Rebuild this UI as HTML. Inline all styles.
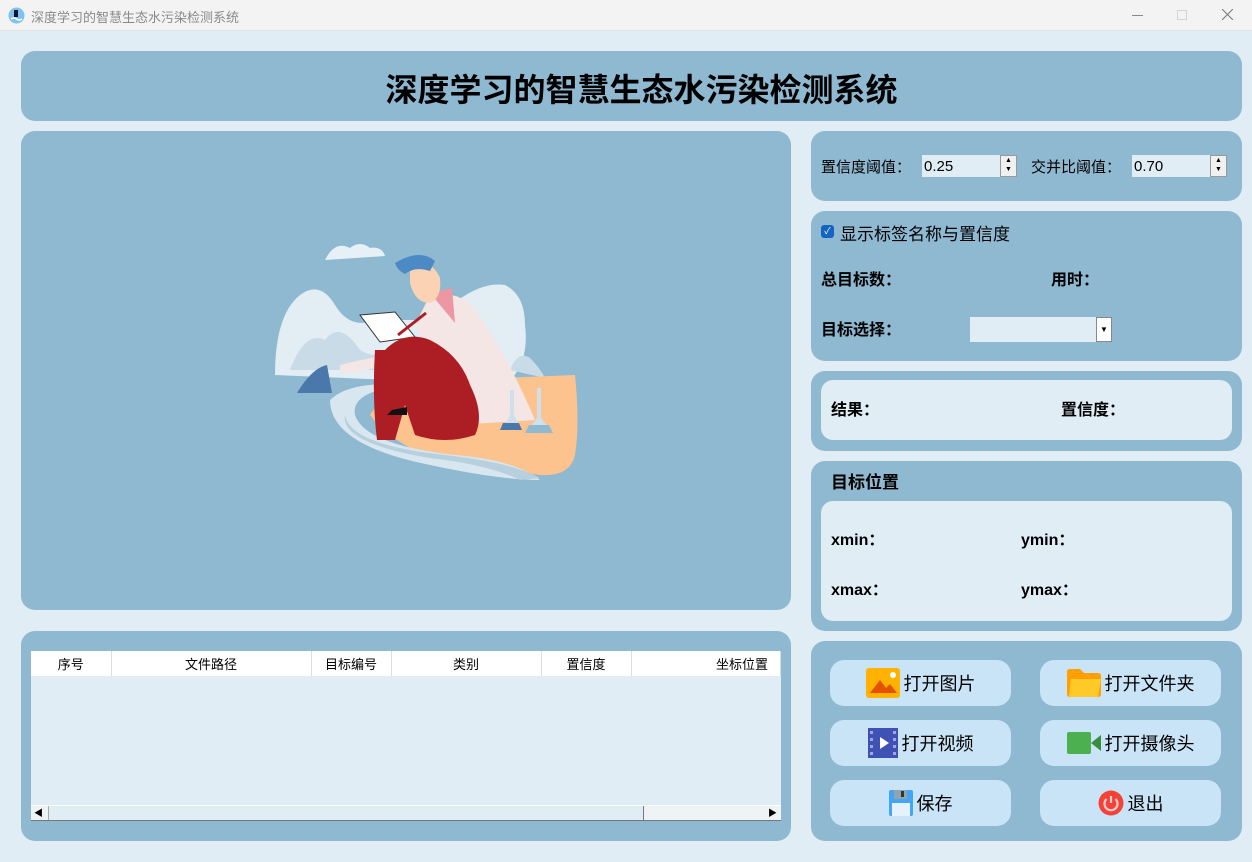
<!DOCTYPE html>
<html><head><meta charset="utf-8"><style>
*{margin:0;padding:0;box-sizing:border-box}
body{width:1252px;height:862px;overflow:hidden;background:#e1edf5;font-family:"Liberation Sans","Noto Sans CJK SC","Microsoft YaHei",sans-serif;position:relative;color:#000}
.a{position:absolute}
.p{position:absolute;background:#8fb8d1;border-radius:14px}
.in{position:absolute;background:#e1edf5;border-radius:12px}
.b{font-weight:bold;font-size:16px}
.btn{position:absolute;background:#c9e4f6;border-radius:14px;width:181px;height:46px;display:flex;align-items:center;justify-content:center;font-size:18px;gap:4px}
.spin{position:absolute;background:#e1edf5;height:22px;font-size:15px;padding:3px 0 0 2px}
.arr{position:absolute;right:0;top:0;width:17px;height:22px;background:#f0f0f0;border:1px solid #999;font-size:7px;line-height:9px;text-align:center}
th{font-weight:normal;font-size:13px;border-right:1px solid #ddd;height:25px;background:#fff}
</style></head><body>
<div class="a" style="left:0;top:0;width:1252px;height:31px;background:#f3f3f3;border-bottom:1px solid #e6e6e6"></div>
<svg class="a" style="left:8px;top:7px" width="17" height="17"><circle cx="8.5" cy="8.5" r="8" fill="#7cc3ef"/><rect x="6" y="3" width="4" height="7" fill="#113"/><path d="M3 12 q3 -2 5.5 0 t5.5 0" stroke="#fff" fill="none" stroke-width="1.5"/></svg>
<div class="a" style="left:31px;top:7px;font-size:13px;color:#8a8a8a">深度学习的智慧生态水污染检测系统</div>
<div class="a" style="left:1132px;top:15px;width:11px;height:1px;background:#888"></div>
<div class="a" style="left:1177px;top:10px;width:10px;height:10px;border:1px solid #d4d4d4"></div>
<svg class="a" style="left:1222px;top:9px" width="11" height="11"><path d="M0 0L11 11M11 0L0 11" stroke="#777" stroke-width="1"/></svg>

<div class="p" style="left:21px;top:51px;width:1221px;height:70px"></div>
<div class="a" style="left:41px;top:65px;width:1201px;text-align:center;font-size:32px;font-weight:bold">深度学习的智慧生态水污染检测系统</div>

<div class="p" style="left:21px;top:131px;width:770px;height:479px"></div>
<svg class="a" style="left:270px;top:235px" width="320" height="250" viewBox="0 0 320 250">
<path d="M55 25 q10-20 25-12 q10-8 20 0 q12-2 15 8 z" fill="#e6f0f6"/>
<path d="M5 140 q0-60 25-80 q20-15 35 10 q15 25 40 15 l60 0 q40-40 70-35 q20 10 20 40 q5 40-20 60 l-230 -10z" fill="#e2edf4"/>
<path d="M20 135 q15-40 35-30 q15-20 35 10 q15 10 35 0 l0 20z" fill="#c9dbe7"/>
<path d="M240 135 q8-20 20-12 q10 10 15 20z" fill="#c9dbe7"/>
<path d="M100 180 q40 50 130 55 l40 5 q30 2 35-20 q5-30 0-80 l-120 5 q-70 10-85 35z" fill="#fdc38e"/>
<path d="M60 165 q20-20 80-15 q-60 5-55 30 q10 30 100 40 q60 5 85 25 q-40 0-110-15 q-100-20-100-65z" fill="#d7e6ef"/>
<path d="M75 180 q5 30 100 40 q70 8 95 23 l-20 2 q-30-15-90-22 q-90-15-85-43z" fill="#b8d0de"/>
<path d="M27 158 q15-25 30-28 l5 28z" fill="#4b78aa"/>
<path d="M160 60 q30-5 45 15 q30 40 60 110 l-80 5 q-20-60-40-100z" fill="#f3e6e4"/>
<path d="M160 58 l22-5 l3 35z" fill="#eb98a4"/>
<path d="M140 35 q20-15 30 8 q2 20-10 25 q-15 0-20-20z" fill="#fbd3b4"/>
<path d="M125 28 q25-15 40-2 l-5 10 q-15-5-25 3 q-8 -4 -10 -11z" fill="#4b8ac4"/>
<path d="M90 80 l35-3 l20 25 l-35 5z" fill="#fff" stroke="#333"/>
<path d="M128 100 l28-22" stroke="#ac1e23" stroke-width="3"/>
<path d="M70 130 q20-5 45-10 l0 10 q-25 8-45 8z" fill="#f3e6e4"/>
<path d="M115 115 q20-20 45-10 q30 15 40 45 q15 30 5 50 q-30 10-60 0 l-10-30 l-10 35 l-18 0 q-5-40-2-90z" fill="#ac1e23"/>
<path d="M122 175 l-5 5 l-5 0 l25 0 l0-8z" fill="#111"/>
<path d="M240 155 l0 25 l-8 15 l20 0 l-8-15 l0-25z" fill="#cfe0ea"/><path d="M233 188 l-3 7 l22 0 l-3-7z" fill="#4b78aa"/>
<path d="M267 153 l0 30 l-12 15 l28 0 l-12-15 l0-30z" fill="#cfe0ea"/><path d="M259 190 l-4 8 l28 0 l-4-8z" fill="#8fb8d1"/>
</svg>

<div class="p" style="left:21px;top:631px;width:770px;height:210px"></div>
<div class="a" style="left:31px;top:651px;width:750px;height:170px;background:#e1edf5">
<table style="border-collapse:collapse;width:750px"><tr><th style="width:80px">序号</th><th style="width:200px">文件路径</th><th style="width:80px">目标编号</th><th style="width:150px">类别</th><th style="width:90px">置信度</th><th style="text-align:right;padding-right:12px">坐标位置</th></tr></table>
<div class="a" style="left:0;top:154px;width:750px;height:16px;background:#eef3f6;border-top:1px solid #fff;border-bottom:1px solid #777"></div>
<div class="a" style="left:17px;top:155px;width:596px;height:14px;background:#e1edf5;border-right:1px solid #777;border-left:1px solid #aaa"></div>
<div class="a" style="left:3px;top:155px;font-size:9px">◀</div><div class="a" style="left:737px;top:155px;font-size:9px">▶</div>
</div>

<div class="p" style="left:811px;top:131px;width:431px;height:70px"></div>
<div class="a" style="left:821px;top:156px;font-size:15px">置信度阈值：</div>
<div class="spin" style="left:922px;top:155px;width:95px">0.25<div class="arr">▲<br>▼</div></div>
<div class="a" style="left:1031px;top:156px;font-size:15px">交并比阈值：</div>
<div class="spin" style="left:1132px;top:155px;width:95px">0.70<div class="arr">▲<br>▼</div></div>

<div class="p" style="left:811px;top:211px;width:431px;height:150px"></div>
<div class="a" style="left:821px;top:225px;width:13px;height:13px;background:#1565c0;border-radius:3px;color:#fff;font-size:9px;text-align:center;line-height:13px">✓</div>
<div class="a" style="left:840px;top:220px;font-size:17px">显示标签名称与置信度</div>
<div class="a b" style="left:821px;top:266px">总目标数：</div>
<div class="a b" style="left:1051px;top:266px">用时：</div>
<div class="a b" style="left:821px;top:316px">目标选择：</div>
<div class="a" style="left:970px;top:317px;width:142px;height:25px;background:#e1edf5"><div class="a" style="right:0;top:0;width:16px;height:25px;background:#fff;border:1px solid #888;font-size:8px;text-align:center;line-height:23px">▼</div></div>

<div class="p" style="left:811px;top:371px;width:431px;height:80px"></div>
<div class="in" style="left:821px;top:380px;width:411px;height:60px"></div>
<div class="a b" style="left:831px;top:396px">结果：</div>
<div class="a b" style="left:1061px;top:396px">置信度：</div>

<div class="p" style="left:811px;top:461px;width:431px;height:170px"></div>
<div class="a b" style="left:831px;top:468px;font-size:17px">目标位置</div>
<div class="in" style="left:821px;top:501px;width:411px;height:120px"></div>
<div class="a b" style="left:831px;top:526px">xmin：</div>
<div class="a b" style="left:1021px;top:526px">ymin：</div>
<div class="a b" style="left:831px;top:576px">xmax：</div>
<div class="a b" style="left:1021px;top:576px">ymax：</div>

<div class="p" style="left:811px;top:641px;width:431px;height:200px"></div>
<div class="btn" style="left:830px;top:660px"><svg width="34" height="30"><rect width="34" height="30" rx="3" fill="#ffb300"/><path d="M4 25 l10-13 l6 8 l4-4 l7 9z" fill="#e65100"/><circle cx="27" cy="7" r="3" fill="#fff"/></svg>打开图片</div>
<div class="btn" style="left:1040px;top:660px"><svg width="34" height="28"><path d="M0 3 q0-3 3-3 h10 l4 4 h14 q3 0 3 3v18q0 3-3 3h-28q-3 0-3-3z" fill="#ffa000"/><path d="M4 10 h30 l-3 18h-29z" fill="#ffca28"/></svg>打开文件夹</div>
<div class="btn" style="left:830px;top:720px"><svg width="30" height="30"><rect width="30" height="30" fill="#3f51b5"/><g fill="#9fa8da"><rect x="2" y="3" width="3" height="3"/><rect x="2" y="10" width="3" height="3"/><rect x="2" y="17" width="3" height="3"/><rect x="2" y="24" width="3" height="3"/><rect x="25" y="3" width="3" height="3"/><rect x="25" y="10" width="3" height="3"/><rect x="25" y="17" width="3" height="3"/><rect x="25" y="24" width="3" height="3"/></g><path d="M12 9 l9 6 l-9 6z" fill="#fff"/></svg>打开视频</div>
<div class="btn" style="left:1040px;top:720px"><svg width="34" height="22"><rect width="24" height="22" rx="2" fill="#4caf50"/><path d="M24 11 l10-8 v16z" fill="#388e3c"/></svg>打开摄像头</div>
<div class="btn" style="left:830px;top:780px"><svg width="24" height="26"><rect width="24" height="26" rx="2" fill="#42a5f5"/><rect x="5" y="0" width="13" height="9" fill="#90a4ae"/><rect x="12" y="1" width="3" height="6" fill="#333"/><rect x="3" y="13" width="18" height="13" fill="#e3f2fd"/></svg>保存</div>
<div class="btn" style="left:1040px;top:780px"><svg width="26" height="26"><circle cx="13" cy="13" r="12.5" fill="#f44336"/><path d="M8.5 9 a6.5 6.5 0 1 0 9 0" stroke="#ffcdd2" stroke-width="2.2" fill="none"/><line x1="13" y1="6" x2="13" y2="13" stroke="#ffcdd2" stroke-width="2.2"/></svg>退出</div>
</body></html>
